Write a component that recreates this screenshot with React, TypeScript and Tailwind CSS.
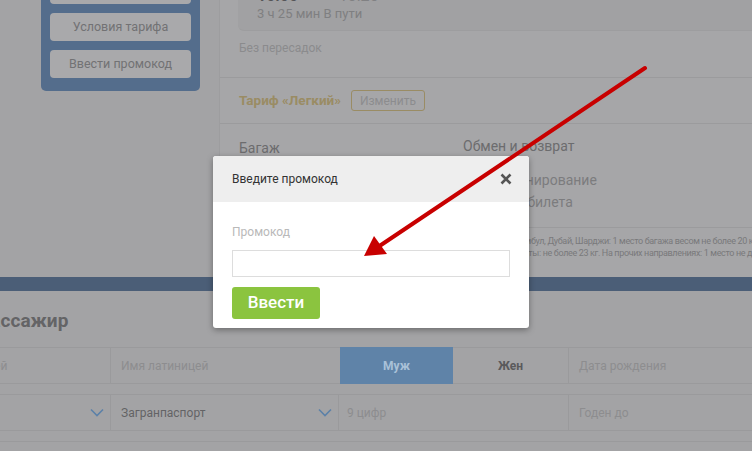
import React from 'react';

const ChevronDown: React.FC = () => (
  <svg width="14" height="9" viewBox="0 0 14 9" fill="none">
    <path d="M1 1.5l6 6 6-6" stroke="#5c81a8" strokeWidth="1.6" />
  </svg>
);

export default function App() {
  return (
    <div className="relative w-[752px] h-[451px] overflow-hidden bg-[#a3a3a5] font-['Roboto','Liberation_Sans',sans-serif]">
      {/* страница под затемнением */}
      <div className="flex h-[277px]">
        <div className="w-[219px] shrink-0">
          <div className="ml-[41px] w-[159px] bg-[#546d8c] rounded-b-[5px] px-[9px] pb-[13px] flex flex-col gap-[9px]">
            <div className="-mt-[24px] h-[28px] rounded-[4px] bg-[#a9a9ab]" />
            <div className="h-[28px] rounded-[4px] bg-[#a9a9ab] flex items-center justify-center text-[12.5px] text-[#727274]">
              Условия тарифа
            </div>
            <div className="h-[28px] rounded-[4px] bg-[#a9a9ab] flex items-center justify-center text-[12.5px] text-[#727274]">
              Ввести промокод
            </div>
          </div>
        </div>

        <div className="flex-1 border-l border-[#9d9d9f] bg-[#a6a6a8] flex flex-col">
          <div className="h-[31px] ml-[18px] bg-[#a1a1a3] rounded-bl-[6px] pl-[19px] border-b border-[#9d9d9f]">
            <div className="-mt-[12px] flex gap-[14px] text-[16px] leading-[16px]">
              <span className="font-bold text-[#555557]">10:00</span>
              <span className="text-[#818183]">—</span>
              <span className="text-[#818183]">13:25</span>
            </div>
            <div className="mt-[2px] text-[13px] leading-[15px] text-[#7f7f81]">3 ч 25 мин В пути</div>
          </div>
          <div className="h-[47px] pl-[19px] pt-[8px] text-[12px] text-[#8b8b8d] border-b border-[#9b9b9d]">
            Без пересадок
          </div>
          <div className="h-[46px] pl-[19px] flex items-center gap-[10px] border-b border-[#9b9b9d]">
            <span className="text-[13.5px] font-bold text-[#9a8c64]">Тариф «Легкий»</span>
            <span className="h-[21px] px-[8px] flex items-center rounded-[3px] border border-[#9a8c64] text-[12px] text-[#8c8c8e]">
              Изменить
            </span>
          </div>
          <div className="h-[104px] pl-[19px] pt-[14px] grid grid-cols-[224px_1fr] border-b border-[#9b9b9d]">
            <div className="text-[14px] text-[#6c6c6e]">Багаж</div>
            <div className="flex flex-col">
              <div className="text-[14px] text-[#6c6c6e] leading-[17px]">Обмен и возврат</div>
              <div className="mt-[17px] pl-[38px] text-[14px] leading-[17px] text-[#7c7c7e]">Бронирование</div>
              <div className="mt-[5px] pl-[7px] text-[14px] leading-[17px] text-[#7c7c7e]">Возврат билета</div>
            </div>
          </div>
          <div className="flex-1 pl-[19px] pt-[7px] overflow-hidden whitespace-nowrap text-[9px] tracking-[-0.35px] leading-[12px] text-[#79797b]">
            <div>Норма бесплатного провоза багажа на рейсах из Москвы в Бангкок, Стамбул, Дубай, Шарджи: 1 место багажа весом не более 20 кг.</div>
            <div className="pl-[9px]">На рейсах в Тель-Авив, Ереван, Баку, Ташкент, Бишкек, Душанбе и Алматы: не более 23 кг. На прочих направлениях: 1 место не должно превышать 23 кг.</div>
          </div>
        </div>
      </div>

      <div className="h-[14px] bg-[#4b5e77]" />

      <div className="h-[56px] pt-[5px] flex items-center">
        <h2 className="-ml-[23px] text-[19px] font-bold text-[#646466]">Пассажир</h2>
      </div>

      <div className="-ml-[120px] w-[918px] flex flex-col gap-[10px]">
        <div className="grid grid-cols-[230px_230px_113px_115px_230px] h-[37px] border-y border-[#9a9a9c]">
          <div className="flex items-center pl-[12px] text-[12px] text-[#8d8d8f]">Фамилия латиницей</div>
          <div className="flex items-center pl-[10px] border-l border-[#9a9a9c] text-[12px] text-[#8d8d8f]">Имя латиницей</div>
          <div className="-my-px flex items-center justify-center bg-[#5f83a8] text-[12px] font-bold text-[#a9c1d8]">Муж</div>
          <div className="flex items-center justify-center text-[12px] font-bold text-[#5a5a5c]">Жен</div>
          <div className="flex items-center pl-[10px] border-l border-[#9a9a9c] text-[12px] text-[#8d8d8f]">Дата рождения</div>
        </div>
        <div className="grid grid-cols-[230px_228px_230px_230px] h-[37px] border-y border-[#9a9a9c]">
          <div className="flex items-center justify-between pl-[10px] pr-[6px] text-[12px] text-[#636365]">
            <span>Россия</span>
            <ChevronDown />
          </div>
          <div className="flex items-center justify-between pl-[10px] pr-[6px] border-l border-[#9a9a9c] text-[12px] text-[#636365]">
            <span>Загранпаспорт</span>
            <ChevronDown />
          </div>
          <div className="flex items-center pl-[8px] border-l border-[#9a9a9c] text-[12px] text-[#8d8d8f]">9 цифр</div>
          <div className="flex items-center pl-[10px] border-l border-[#9a9a9c] text-[12px] text-[#8d8d8f]">Годен до</div>
        </div>
        <div className="h-[20px] border-t border-[#9a9a9c]" />
      </div>

      {/* модальное окно */}
      <div className="absolute left-[213px] top-[156px] w-[316px] h-[172px] bg-white rounded-[3px] shadow-[0_2px_6px_rgba(0,0,0,0.35)] overflow-hidden">
        <div className="h-[46px] bg-[#eeeeee] flex items-center justify-between pl-[19px] pr-[17px]">
          <span className="text-[12px] text-[#333333]">Введите промокод</span>
          <svg width="12" height="12" viewBox="0 0 12 12">
            <path d="M1.5 1.5l9 9M10.5 1.5l-9 9" stroke="#555555" strokeWidth="2.6" />
          </svg>
        </div>
        <div className="px-[19px] pt-[23px]">
          <div className="text-[12px] leading-[15px] text-[#b9b9b9]">Промокод</div>
          <input
            type="text"
            className="mt-[10px] block w-[278px] h-[27px] border border-[#dddddd] outline-none"
          />
          <button className="mt-[10px] w-[88px] h-[32px] rounded-[3px] bg-[#8bc43f] text-white text-[17px] font-medium">
            Ввести
          </button>
        </div>
      </div>

      {/* стрелка */}
      <svg className="absolute inset-0 pointer-events-none" width="752" height="451" viewBox="0 0 752 451">
        <line x1="645" y1="68" x2="378" y2="247" stroke="#c80000" strokeWidth="4" strokeLinecap="round" />
        <polygon points="364,256 387,254 374,236" fill="#c80000" />
      </svg>
    </div>
  );
}
